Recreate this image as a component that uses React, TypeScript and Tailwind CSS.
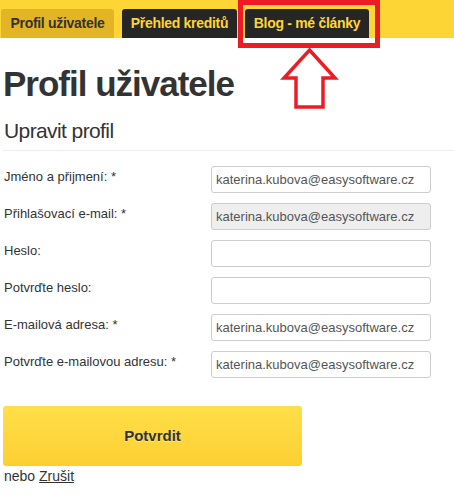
import React from "react";

const tabs = [
  { label: "Profil uživatele", active: true, width: "w-[113px]" },
  { label: "Přehled kreditů", active: false, width: "w-[115px]" },
  { label: "Blog - mé články", active: false, width: "w-[124px]" },
] as const;

const EMAIL = "katerina.kubova@easysoftware.cz";

const fields = [
  { label: "Jméno a přijmení: *", value: EMAIL, disabled: false },
  { label: "Přihlašovací e-mail: *", value: EMAIL, disabled: true },
  { label: "Heslo:", value: "", disabled: false },
  { label: "Potvrďte heslo:", value: "", disabled: false },
  { label: "E-mailová adresa: *", value: EMAIL, disabled: false },
  { label: "Potvrďte e-mailovou adresu: *", value: EMAIL, disabled: false },
];

function UpArrow() {
  return (
    <svg
      className="absolute left-[280px] top-[47px] h-[62px] w-[60px]"
      viewBox="0 0 60 62"
      fill="none"
      aria-hidden
    >
      <path
        d="M29.5 3 L55 31 L43 31 L43 60 L16 60 L16 31 L4 31 Z"
        stroke="#ed1c24"
        strokeWidth="3.5"
        strokeLinejoin="miter"
      />
    </svg>
  );
}

export default function App() {
  return (
    <div className="relative min-h-[496px] w-[454px] bg-white font-['Liberation_Sans',Arial,sans-serif] text-[#333]">
      <nav className="flex h-[38px] items-end gap-[8px] bg-[#fdd535] pl-[1px]">
        {tabs.map((tab) => (
          <div
            key={tab.label}
            className={`flex h-[29px] items-center justify-center rounded-t-[3px] text-[14px] font-bold tracking-[-0.3px] ${tab.width} ${
              tab.active ? "bg-[#e3b424] text-[#333]" : "bg-[#262626] text-[#fdd535]"
            }`}
          >
            {tab.label}
          </div>
        ))}
      </nav>

      {/* annotation */}
      <div className="absolute left-[238px] top-0 h-[48px] w-[142px] border-[5px] border-[#ed1c24]" />
      <UpArrow />

      <main className="pl-[3px]">
        <h1 className="mt-[26px] text-[35px] font-bold leading-[40px] tracking-[-1px]">Profil uživatele</h1>
        <h2 className="mt-[15px] border-b border-[#eee] pb-[7px] pl-px text-[21px] leading-[24px] tracking-[-0.6px]">
          Upravit profil
        </h2>

        <div className="mt-[15px] flex flex-col gap-[10px]">
          {fields.map((f) => (
            <div key={f.label} className="flex h-[27px] items-start">
              <label className="w-[208px] pt-[2px] pl-px text-[13px] leading-[18px]">{f.label}</label>
              <input
                readOnly
                disabled={f.disabled}
                value={f.value}
                className={`h-[27px] w-[220px] rounded-[3px] border border-[#ccc] px-[4px] text-[13px] text-[#555] outline-none ${
                  f.disabled ? "bg-[#eee]" : "bg-white"
                }`}
              />
            </div>
          ))}
        </div>

        <button className="mt-[28px] flex h-[60px] w-[299px] items-center justify-center rounded-[3px] bg-gradient-to-b from-[#ffdf48] to-[#fdcf31] text-[15px] font-bold text-[#333] [text-shadow:0_1px_0_rgba(255,255,255,0.5)]">
          Potvrdit
        </button>
        <p className="mt-[1px] pl-px text-[14px] leading-[18px]">
          nebo <a className="underline">Zrušit</a>
        </p>
      </main>
    </div>
  );
}
